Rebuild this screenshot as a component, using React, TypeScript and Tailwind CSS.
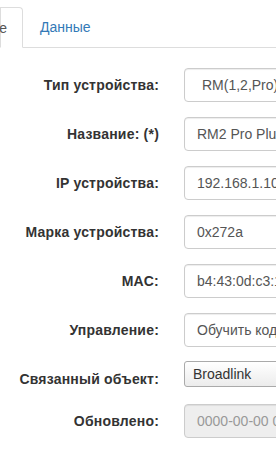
import React from 'react'

const rows: { label: string; value: string; kind?: 'select' | 'native' | 'disabled' }[] = [
  { label: 'Тип устройства:', value: 'RM(1,2,Pro),RM3 mini', kind: 'select' },
  { label: 'Название: (*)', value: 'RM2 Pro Plus' },
  { label: 'IP устройства:', value: '192.168.1.100' },
  { label: 'Марка устройства:', value: '0x272a' },
  { label: 'MAC:', value: 'b4:43:0d:c3:1a:22' },
  { label: 'Управление:', value: 'Обучить код' },
  { label: 'Связанный объект:', value: 'Broadlink', kind: 'native' },
  { label: 'Обновлено:', value: '0000-00-00 00:00:00', kind: 'disabled' },
]

export default function App() {
  return (
    <div className="w-[276px] h-[476px] overflow-hidden bg-white text-[14px] text-[#333]" style={{ fontFamily: '"Liberation Sans", Arial, sans-serif' }}>
      <div className="w-[600px]">
        <ul className="flex pt-[7px] border-b border-[#ddd]">
          <li className="w-[23px] -mb-px overflow-hidden">
            <div className="flex justify-end h-[41px] border border-[#ddd] border-b-white rounded-tr-[4px] bg-white pr-[15px] pt-[10px] leading-5 text-[#555] whitespace-nowrap">
              Основные
            </div>
          </li>
          <li className="ml-[2px]">
            <div className="px-[15px] pt-[10px] pb-[10px] leading-5 text-[#337ab7]">Данные</div>
          </li>
        </ul>
        <div className="pt-[20px]">
          {rows.map(r => (
            <div key={r.label} className="flex mb-[15px]">
              <label className="w-[159px] text-right font-bold tracking-[0.2px] pt-[7px] leading-5 whitespace-nowrap">{r.label}</label>
              <div className="ml-[25px] w-[300px]">
                {r.kind === 'native' ? (
                  <div className="h-[26px] mt-[-1px] border border-[#aaa] rounded-[3px] bg-gradient-to-b from-white to-[#ececec] pl-[8px] leading-[24px] text-[#333] whitespace-nowrap">
                    {r.value}
                  </div>
                ) : (
                  <div
                    className={
                      'h-[34px] border border-[#ccc] rounded-[4px] leading-[32px] whitespace-nowrap shadow-[inset_0_1px_1px_rgba(0,0,0,0.075)] ' +
                      (r.kind === 'disabled' ? 'bg-[#eee] text-[#999] pl-[12px]' : 'bg-white text-[#555] ' + (r.kind === 'select' ? 'pl-[17px]' : 'pl-[12px]'))
                    }
                  >
                    {r.value}
                  </div>
                )}
              </div>
            </div>
          ))}
        </div>
      </div>
    </div>
  )
}
